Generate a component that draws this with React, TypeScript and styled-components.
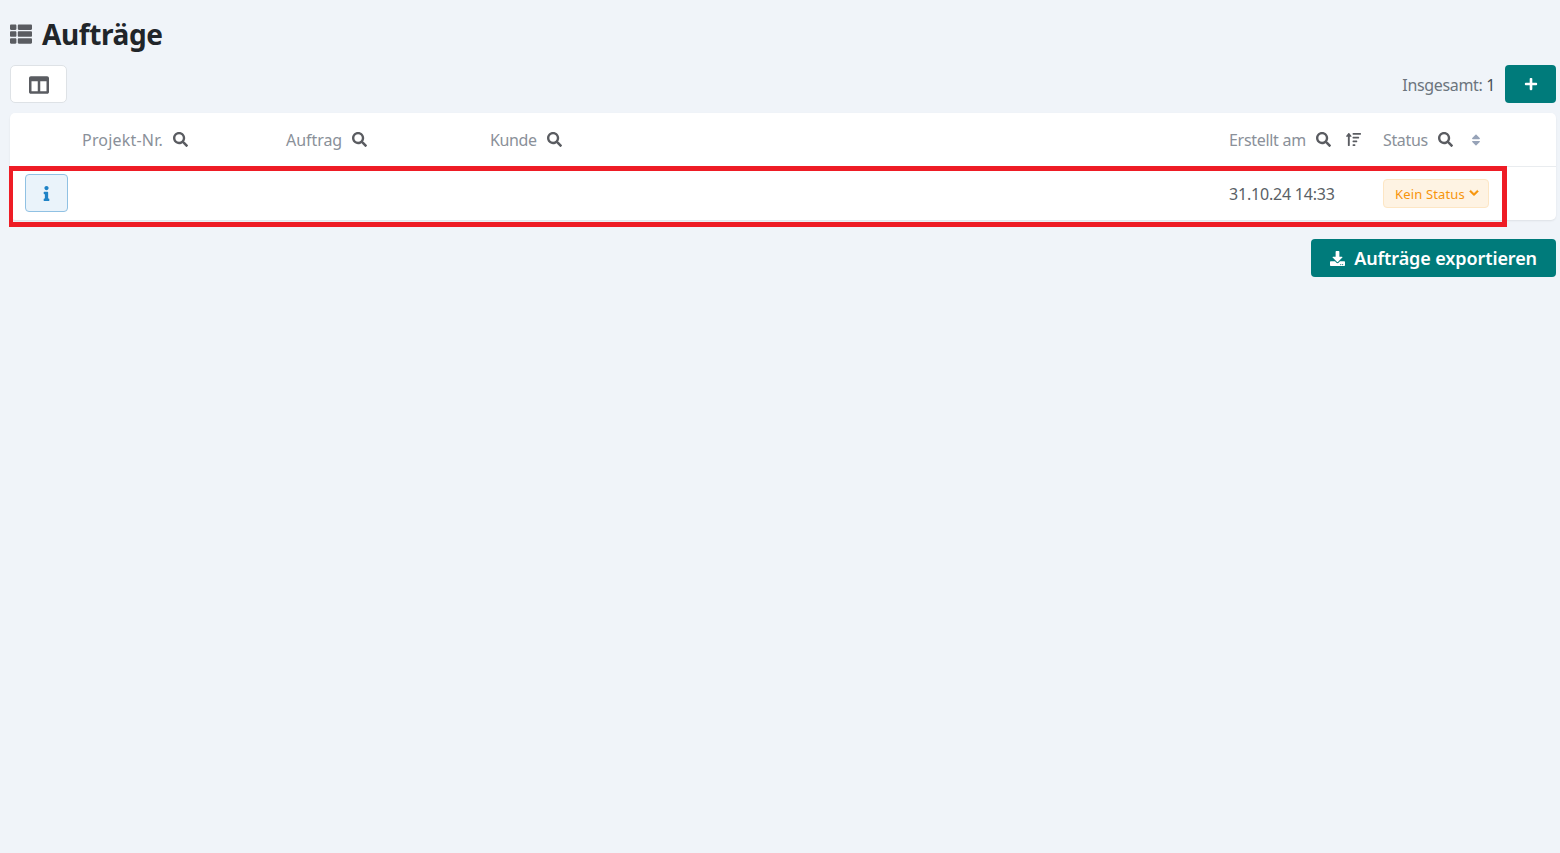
import * as React from 'react';
import styled, { createGlobalStyle } from 'styled-components';
import {
  FaThList,
  FaColumns,
  FaPlus,
  FaSearch,
  FaSortAmountUp,
  FaSort,
  FaInfo,
  FaChevronDown,
  FaDownload,
} from 'react-icons/fa';

const GlobalStyle = createGlobalStyle`
  html, body {
    margin: 0;
    background: #f0f4f9;
    font-family: 'Noto Sans', 'Open Sans', sans-serif;
  }
`;

const Page = styled.div`
  box-sizing: border-box;
  height: 853px;
  padding: 15px 4px 0 10px;
  overflow: hidden;
`;

const TitleRow = styled.div`
  display: flex;
  align-items: center;
  gap: 10px;
  height: 38px;
  margin-bottom: 12px;
  color: #212529;
`;

const TitleIcon = styled(FaThList)`
  width: 22px;
  height: 22px;
  color: #5a5c61;
`;

const Title = styled.h1`
  margin: 0;
  font-size: 28px;
  line-height: 38px;
  font-weight: 700;
  letter-spacing: -0.4px;
`;

const Toolbar = styled.div`
  display: flex;
  align-items: center;
  justify-content: space-between;
  height: 38px;
  margin-bottom: 10px;
`;

const ColumnsButton = styled.button`
  display: flex;
  align-items: center;
  justify-content: center;
  width: 57px;
  height: 38px;
  padding: 2px 0 0 1px;
  background: #fff;
  border: 1px solid #dee2e6;
  border-radius: 5px;
  color: #5a5c61;
  font-size: 20px;
`;

const Total = styled.div`
  display: flex;
  align-items: center;
  gap: 10px;
  font-size: 16px;
  letter-spacing: -0.35px;
  color: #6c757d;
`;

const TotalText = styled.span`
  padding-top: 2px;
`;

const TotalCount = styled.span`
  color: #495057;
`;

const PrimaryButton = styled.button`
  display: flex;
  align-items: center;
  justify-content: center;
  gap: 9px;
  height: 38px;
  padding: 0 19px;
  background: #007b7b;
  border: none;
  border-radius: 4px;
  color: #fff;
  font-family: inherit;
  font-size: 18px;
  font-weight: 600;
  letter-spacing: -0.1px;
`;

const AddButton = styled(PrimaryButton)`
  width: 51px;
  padding: 0;
`;

const Card = styled.div`
  position: relative;
  background: #fff;
  border-radius: 5px;
  box-shadow: 0 1px 2px rgba(0, 0, 0, 0.08);
`;

const gridColumns = '72px 204px 204px 739px 154px 1fr';

const HeaderRow = styled.div`
  display: grid;
  grid-template-columns: ${gridColumns};
  align-items: center;
  align-content: center;
  height: 53px;
  border-bottom: 1px solid #e9ecef;
  font-size: 16px;
  color: #8a9099;
`;

const HeaderCell = styled.div<{ $spacing: number }>`
  display: flex;
  align-items: center;
  gap: 10px;
  letter-spacing: ${({ $spacing }) => $spacing}px;
`;

const HeaderIcon = styled.span`
  display: flex;
  color: #5a5c61;
  font-size: 15px;
`;

const SortIcon = styled.span`
  display: flex;
  margin-left: 5px;
  color: #5a5c61;
  font-size: 15px;
`;

const SortIdleIcon = styled(SortIcon)`
  margin-left: 6px;
  color: #97a3b8;
  font-size: 14px;
`;

const DataRow = styled.div`
  display: grid;
  grid-template-columns: ${gridColumns};
  align-items: center;
  height: 53px;
  font-size: 16px;
  letter-spacing: -0.2px;
  color: #5a5f66;
`;

const InfoCell = styled.div`
  padding: 0 0 1px 15px;
`;

const InfoButton = styled.button`
  display: flex;
  align-items: center;
  justify-content: center;
  width: 43px;
  height: 38px;
  padding: 0;
  background: #eaf3fa;
  border: 1px solid #90c1e3;
  border-radius: 4px;
  color: #1f83c6;
  font-size: 15px;
`;

const StatusBadge = styled.div`
  display: flex;
  align-items: center;
  box-sizing: border-box;
  gap: 4px;
  width: 106px;
  height: 29px;
  padding-left: 11px;
  background: #fef3e3;
  border: 1px solid #fde6c4;
  border-radius: 4px;
  color: #f7950b;
  font-size: 13px;
  letter-spacing: 0.15px;
`;

const BadgeChevron = styled(FaChevronDown)`
  width: 10px;
  height: 10px;
  margin-top: -2px;
  stroke: currentColor;
  stroke-width: 30px;
`;

const Highlight = styled.div`
  position: absolute;
  left: -1px;
  top: 53px;
  width: 1498px;
  height: 61px;
  box-sizing: border-box;
  border: 5px solid #ee1c25;
  border-left-width: 4px;
  pointer-events: none;
`;

const Footer = styled.div`
  display: flex;
  justify-content: flex-end;
  margin-top: 19px;
`;

const ExportIcon = styled(FaDownload)`
  width: 15px;
  height: 15px;
`;

const columns = [
  { name: 'Projekt-Nr.', spacing: 0.2 },
  { name: 'Auftrag', spacing: -0.05 },
  { name: 'Kunde', spacing: -0.4 },
];

export default function App() {
  return (
    <Page>
      <GlobalStyle />
      <TitleRow>
        <TitleIcon />
        <Title>Aufträge</Title>
      </TitleRow>
      <Toolbar>
        <ColumnsButton>
          <FaColumns />
        </ColumnsButton>
        <Total>
          <TotalText>
            Insgesamt: <TotalCount>1</TotalCount>
          </TotalText>
          <AddButton>
            <FaPlus size={14} />
          </AddButton>
        </Total>
      </Toolbar>
      <Card>
        <HeaderRow>
          <div />
          {columns.map(({ name, spacing }) => (
            <HeaderCell key={name} $spacing={spacing}>
              {name}
              <HeaderIcon>
                <FaSearch />
              </HeaderIcon>
            </HeaderCell>
          ))}
          <HeaderCell $spacing={-0.3}>
            Erstellt am
            <HeaderIcon>
              <FaSearch />
            </HeaderIcon>
            <SortIcon>
              <FaSortAmountUp />
            </SortIcon>
          </HeaderCell>
          <HeaderCell $spacing={-0.35}>
            Status
            <HeaderIcon>
              <FaSearch />
            </HeaderIcon>
            <SortIdleIcon>
              <FaSort />
            </SortIdleIcon>
          </HeaderCell>
          <div />
        </HeaderRow>
        <DataRow>
          <InfoCell>
            <InfoButton>
              <FaInfo />
            </InfoButton>
          </InfoCell>
          <div />
          <div />
          <div />
          <div>31.10.24 14:33</div>
          <StatusBadge>
            Kein Status
            <BadgeChevron />
          </StatusBadge>
        </DataRow>
        <Highlight />
      </Card>
      <Footer>
        <PrimaryButton>
          <ExportIcon />
          Aufträge exportieren
        </PrimaryButton>
      </Footer>
    </Page>
  );
}
